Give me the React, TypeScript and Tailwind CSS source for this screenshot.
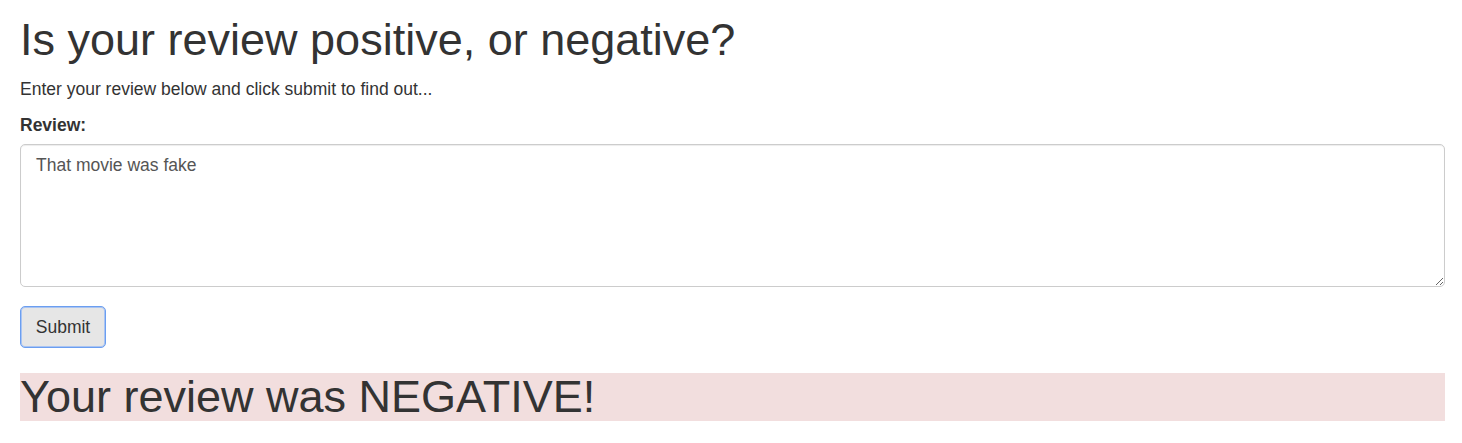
export default function App() {
  return (
    <div className="min-h-screen bg-white pl-[20px] pr-[17px] text-[#333] font-['Liberation_Sans',Arial,sans-serif] text-[17.5px] leading-[25px]">
      <h1 className="pt-[15px] text-[45px] leading-[49.5px] font-normal">
        Is your review positive, or negative?
      </h1>
      <p className="mt-[12.5px]">Enter your review below and click submit to find out...</p>

      <form className="mt-[11px]" onSubmit={(e) => e.preventDefault()}>
        <div className="mb-[18.75px]">
          <label className="inline-block font-bold mb-[6.25px]">Review:</label>
          <textarea
            className="block w-full h-[143px] rounded-[5px] border border-[#ccc] px-[15px] py-[7.5px] text-[#555] text-[17.5px] leading-[25px] shadow-[inset_0_1px_1px_rgba(0,0,0,0.075)]"
            defaultValue="That movie was fake"
          />
        </div>
        <button
          type="submit"
          className="h-[42px] w-[86px] rounded-[5px] border border-[#6b9ef0] bg-[#e6e6e6] text-[#333] text-[17.5px] leading-[25px] shadow-[inset_0_0_0_1px_#a9c4f2]"
        >
          Submit
        </button>
      </form>

      <h1 className="mt-[25px] bg-[#f2dede] text-[45px] leading-[48px] font-normal">
        Your review was NEGATIVE!
      </h1>
    </div>
  );
}
